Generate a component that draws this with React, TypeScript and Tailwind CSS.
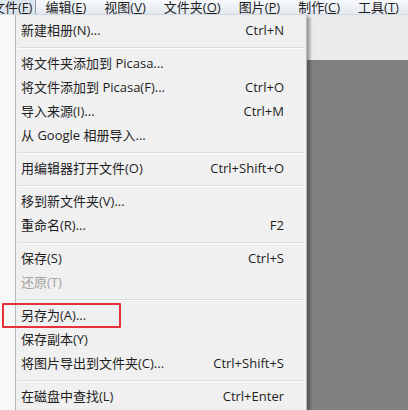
import React from "react";

type Item =
  | { type: "item"; label: string; shortcut?: string; disabled?: boolean }
  | { type: "sep" };

const items: Item[] = [
  { type: "item", label: "新建相册(N)...", shortcut: "Ctrl+N" },
  { type: "sep" },
  { type: "item", label: "将文件夹添加到 Picasa..." },
  { type: "item", label: "将文件添加到 Picasa(F)...", shortcut: "Ctrl+O" },
  { type: "item", label: "导入来源(I)...", shortcut: "Ctrl+M" },
  { type: "item", label: "从 Google 相册导入..." },
  { type: "sep" },
  { type: "item", label: "用编辑器打开文件(O)", shortcut: "Ctrl+Shift+O" },
  { type: "sep" },
  { type: "item", label: "移到新文件夹(V)..." },
  { type: "item", label: "重命名(R)...", shortcut: "F2" },
  { type: "sep" },
  { type: "item", label: "保存(S)", shortcut: "Ctrl+S" },
  { type: "item", label: "还原(T)", disabled: true },
  { type: "sep" },
  { type: "item", label: "另存为(A)..." },
  { type: "item", label: "保存副本(Y)" },
  { type: "item", label: "将图片导出到文件夹(C)...", shortcut: "Ctrl+Shift+S" },
  { type: "sep" },
  { type: "item", label: "在磁盘中查找(L)", shortcut: "Ctrl+Enter" },
];

const bar: [string, string][] = [
  ["编辑", "E"],
  ["视图", "V"],
  ["文件夹", "O"],
  ["图片", "P"],
  ["制作", "C"],
  ["工具", "T"],
];

export default function App() {
  return (
    <div
      className="relative w-[408px] h-[410px] overflow-hidden flex flex-col text-[13px] text-[#1e1e1e] bg-[#f8f8f8]"
      style={{ fontFamily: '"Open Sans", "Noto Sans CJK SC", sans-serif' }}
    >
      {/* menu bar */}
      <div className="h-[15px] flex items-center leading-[15px] whitespace-nowrap bg-gradient-to-b from-[#f7f9fc] to-[#e4e9f0] border-b border-[#d5dce6]">
        <div className="ml-[-8px] pr-[3px] h-full flex items-center border-r border-[#8f9cae] bg-[#dfe5ee]">
          文件(<span className="underline">F</span>)
        </div>
        <div className="flex">
          {bar.map(([t, k]) => (
            <div key={t} className="px-[9px] h-full flex items-center">
              {t}(<span className="underline">{k}</span>)
            </div>
          ))}
        </div>
      </div>

      <div className="flex-1 flex min-h-0">
        <div className="w-[15px] bg-[#f8f8f8]" />
        {/* dropdown */}
        <div className="relative z-10 w-[292px] bg-[#f0f0f0] border-x border-[#b9b9b9] pt-[4px] shadow-[3px_2px_3px_rgba(0,0,0,0.35)]">
          {items.map((it, i) =>
            it.type === "sep" ? (
              <div key={i} className="h-[9px] flex flex-col justify-center px-[2px]">
                <div className="h-px bg-[#dcdcdc]" />
                <div className="h-px bg-[#fcfcfc]" />
              </div>
            ) : (
              <div
                key={i}
                className={
                  "h-[24px] flex items-center justify-between pl-[5px] pr-[22px] whitespace-nowrap " +
                  (it.disabled ? "text-[#a3a3a3]" : "")
                }
              >
                <span>{it.label}</span>
                {it.shortcut && <span>{it.shortcut}</span>}
              </div>
            )
          )}
        </div>
        {/* background area */}
        <div className="flex-1 flex flex-col">
          <div className="h-[45px] bg-[#ebebeb]" />
          <div className="flex-1 bg-[#808080]" />
        </div>
      </div>

      {/* red annotation box */}
      <div className="absolute z-20 left-[2px] top-[303px] w-[119px] h-[25px] border-2 border-[#e3303b] rounded-[1px] pointer-events-none" />
    </div>
  );
}
